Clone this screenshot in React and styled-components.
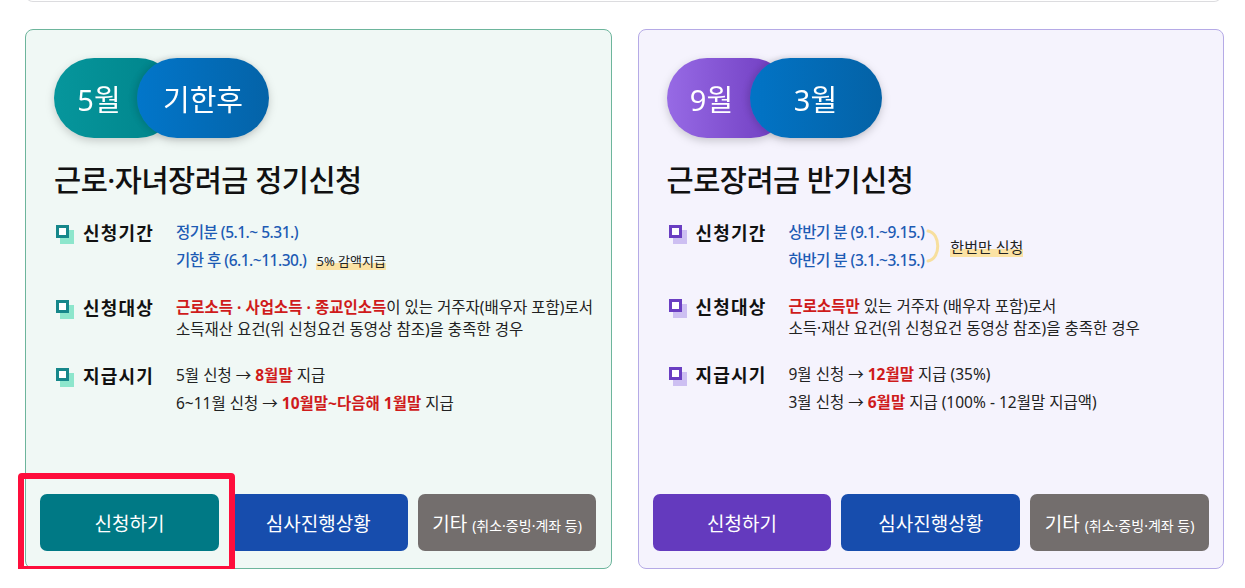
import React from 'react';
import styled, { createGlobalStyle, css } from 'styled-components';

const GlobalStyle = createGlobalStyle`
  html, body {
    margin: 0;
    padding: 0;
    background: #fff;
  }
  body {
    font-family: 'Noto Sans', 'Noto Sans CJK KR', sans-serif;
    color: #222;
    overflow: hidden;
  }
`;

const THEMES = {
  green: {
    bg: '#f0f8f5',
    border: '#6db59c',
    pillA: 'linear-gradient(90deg, #06969c 0%, #00838a 100%)',
    pillB: 'linear-gradient(90deg, #0276ca 0%, #0463a8 100%)',
    iconBorder: '#16878a',
    iconBack: '#8de6cc',
    apply: '#007985',
  },
  purple: {
    bg: '#f5f3fd',
    border: '#b5aae6',
    pillA: 'linear-gradient(90deg, #976ae5 0%, #6c39bd 100%)',
    pillB: 'linear-gradient(90deg, #0274c6 0%, #0462a6 100%)',
    iconBorder: '#6a3ec2',
    iconBack: '#cdbff2',
    apply: '#643abe',
  },
};

// built lazily so the styled parts below are defined by then
const getCards = () => [
  {
    id: 0,
    theme: 'green',
    pill: ['5월', '기한후'],
    title: '근로·자녀장려금 정기신청',
    highlight: true,
    rows: [
      {
        id: 'period',
        label: '신청기간',
        lines: [
          <Blue key="a">정기분 (5.1.~ 5.31.)</Blue>,
          <span key="b">
            <Blue>기한 후 (6.1.~11.30.)</Blue>
            <Note>5% 감액지급</Note>
          </span>,
        ],
      },
      {
        id: 'target',
        label: '신청대상',
        wrap: (
          <>
            <Red>근로소득 · 사업소득 · 종교인소득</Red>이 있는 거주자(배우자 포함)로서
            <br />
            소득재산 요건(위 신청요건 동영상 참조)을 충족한 경우
          </>
        ),
      },
      {
        id: 'pay',
        label: '지급시기',
        lines: [
          <span key="a">
            5월 신청 → <Red>8월말</Red> 지급
          </span>,
          <span key="b">
            6~11월 신청 → <Red>10월말~다음해 1월말</Red> 지급
          </span>,
        ],
      },
    ],
  },
  {
    id: 1,
    theme: 'purple',
    pill: ['9월', '3월'],
    title: '근로장려금 반기신청',
    rows: [
      {
        id: 'period',
        label: '신청기간',
        once: true,
        lines: [
          <Blue key="a">상반기 분 (9.1.~9.15.)</Blue>,
          <Blue key="b">하반기 분 (3.1.~3.15.)</Blue>,
        ],
      },
      {
        id: 'target',
        label: '신청대상',
        wrap: (
          <>
            <Red>근로소득만</Red> 있는 거주자 (배우자 포함)로서
            <br />
            소득·재산 요건(위 신청요건 동영상 참조)을 충족한 경우
          </>
        ),
      },
      {
        id: 'pay',
        label: '지급시기',
        lines: [
          <span key="a">
            9월 신청 → <Red>12월말</Red> 지급 (35%)
          </span>,
          <span key="b">
            3월 신청 → <Red>6월말</Red> 지급 (100% - 12월말 지급액)
          </span>,
        ],
      },
    ],
  },
];

const Brace = () => (
  <svg width="18" height="36" viewBox="0 0 18 36" fill="none">
    <path
      d="M2 3 C 15 5, 15 31, 2 33"
      stroke="#f7df9e"
      strokeWidth="3"
      strokeLinecap="round"
    />
  </svg>
);

function Card({ card }) {
  const t = THEMES[card.theme];
  return (
    <CardBox $t={t}>
      <Head>
        <Pill>
          <PillA $bg={t.pillA}>{card.pill[0]}</PillA>
          <PillB $bg={t.pillB}>{card.pill[1]}</PillB>
        </Pill>
        <Title>{card.title}</Title>
        <List>
          {card.rows.map((r) => (
            <Row key={r.id}>
              <Label>
                <Check $t={t} />
                {r.label}
              </Label>
              {r.wrap ? (
                <Wrapped>{r.wrap}</Wrapped>
              ) : (
                <Lines>
                  <LineGroup>
                    {r.lines.map((l, i) => (
                      <Line key={i}>{l}</Line>
                    ))}
                  </LineGroup>
                  {r.once && (
                    <Once>
                      <Brace />
                      <Note $big>한번만 신청</Note>
                    </Once>
                  )}
                </Lines>
              )}
            </Row>
          ))}
        </List>
      </Head>

      <Buttons>
        <Btn $bg={t.apply}>신청하기</Btn>
        <Btn $bg="#174dad">심사진행상황</Btn>
        <Btn $bg="#736e6d">
          기타 <small>(취소·증빙·계좌 등)</small>
        </Btn>
      </Buttons>

      {card.highlight && <Marker />}
    </CardBox>
  );
}

export default function App() {
  const cards = getCards();
  return (
    <>
      <GlobalStyle />
      <Page>
        <PrevBox />
        <Cards>
          {cards.map((c) => (
            <Card key={c.id} card={c} />
          ))}
        </Cards>
      </Page>
    </>
  );
}

const Page = styled.div`
  padding: 0 21px 0 25px;
`;

const PrevBox = styled.div`
  margin-top: -20px;
  height: 21px;
  margin-right: 2px;
  border: 1px solid #dcdcdf;
  border-top: none;
  border-radius: 0 0 8px 8px;
  background: #fff;
`;

const Cards = styled.div`
  display: grid;
  grid-template-columns: minmax(0, 1fr) minmax(0, 1fr);
  gap: 26px;
  margin-top: 27px;
`;

const CardBox = styled.div`
  position: relative;
  isolation: isolate;
  display: flex;
  flex-direction: column;
  min-width: 0;
  height: 540px;
  box-sizing: border-box;
  padding: 28px 14px 17px;
  background: ${(p) => p.$t.bg};
  border: 1px solid ${(p) => p.$t.border};
  border-radius: 8px;
`;

const Head = styled.div`
  padding: 0 14px;
`;

const Pill = styled.div`
  display: flex;
  height: 80px;
  filter: drop-shadow(0 3px 4px rgba(0, 0, 0, 0.18));
`;

const pillBase = css`
  display: flex;
  align-items: center;
  justify-content: center;
  height: 80px;
  border-radius: 40px;
  color: #fff;
  font-size: 29px;
  font-weight: 400;
  background: ${(p) => p.$bg};
`;

const PillA = styled.div`
  ${pillBase};
  width: 124px;
  box-sizing: border-box;
  padding: 0 40px 0 6px;
`;

const PillB = styled.div`
  ${pillBase};
  width: 132px;
  margin-left: -41px;
  box-shadow: -3px 0 6px rgba(0, 0, 0, 0.12);
`;

const Title = styled.h2`
  margin: 22px 0 0;
  font-size: 29.5px;
  line-height: 40px;
  font-weight: 500;
  color: #111;
  letter-spacing: -0.5px;
`;

const List = styled.div`
  display: flex;
  flex-direction: column;
  gap: 18px;
  margin-top: 18px;
`;

const Row = styled.div`
  display: flex;
  align-items: flex-start;
`;

const Label = styled.div`
  display: flex;
  align-items: center;
  width: 122px;
  flex-shrink: 0;
  height: 28px;
  font-size: 18px;
  font-weight: 700;
  letter-spacing: 1.2px;
  color: #111;
`;

const Check = styled.span`
  position: relative;
  width: 13px;
  height: 13px;
  margin: -2px 14px 0 2px;
  flex-shrink: 0;
  box-sizing: border-box;
  border: 3px solid ${(p) => p.$t.iconBorder};
  background: #fff;

  &::after {
    content: '';
    position: absolute;
    left: 1px;
    top: 2px;
    width: 14px;
    height: 14px;
    background: ${(p) => p.$t.iconBack};
    z-index: -1;
  }
`;

const Lines = styled.div`
  display: flex;
  align-items: center;
`;

const LineGroup = styled.div`
  display: flex;
  flex-direction: column;
`;

const Line = styled.div`
  font-size: 15.5px;
  line-height: 28px;
  white-space: nowrap;
`;

const Wrapped = styled.div`
  padding: 3px 0;
  font-size: 15.5px;
  line-height: 22px;
  white-space: nowrap;
`;

const Blue = styled.span`
  color: #1d5bb4;
  font-weight: 500;
  letter-spacing: -0.5px;
`;

const Red = styled.span`
  color: #cf1b1b;
  font-weight: 700;
`;

const Note = styled.span`
  margin-left: ${(p) => (p.$big ? '6px' : '10px')};
  font-size: ${(p) => (p.$big ? '15px' : '13px')};
  color: #222;
  background: linear-gradient(transparent 62%, #fbe2a4 62%);
  white-space: nowrap;
`;

const Once = styled.div`
  display: flex;
  align-items: center;
  margin-left: 2px;
`;

const Buttons = styled.div`
  display: grid;
  grid-template-columns: repeat(3, minmax(0, 1fr));
  gap: 10px;
  margin-top: auto;
`;

const Btn = styled.button`
  height: 57px;
  border: none;
  border-radius: 7px;
  background: ${(p) => p.$bg};
  color: #fff;
  font-family: inherit;
  font-size: 19px;
  cursor: pointer;
  padding: 0;
  white-space: nowrap;

  small {
    font-size: 14px;
  }
`;

const Marker = styled.div`
  position: absolute;
  left: -8px;
  top: 443px;
  width: 217px;
  height: 99px;
  box-sizing: border-box;
  border: 6px solid #fe0e3c;
  border-radius: 4px;
  pointer-events: none;
`;
